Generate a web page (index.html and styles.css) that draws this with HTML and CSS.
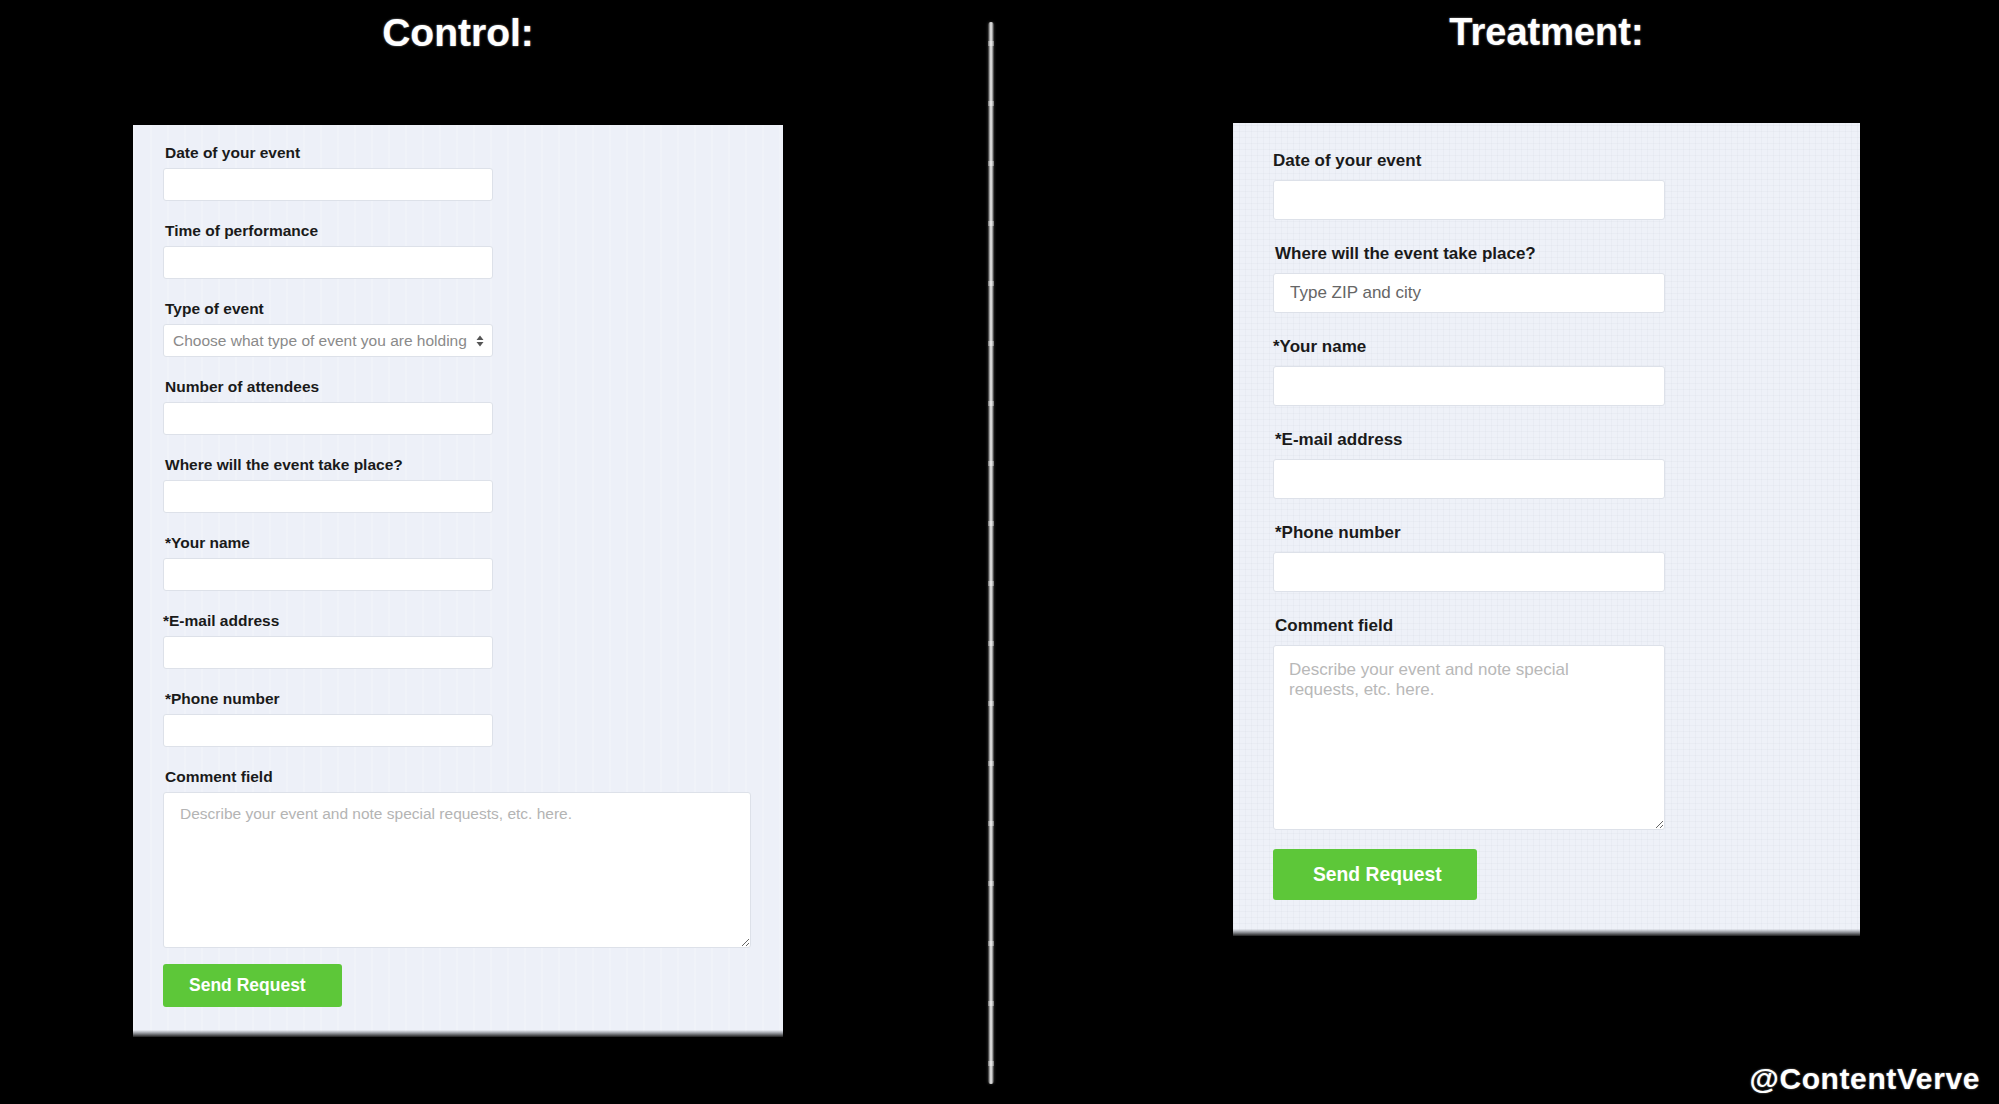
FILE: index.html
```html
<!DOCTYPE html>
<html lang="en">
<head>
  <meta charset="UTF-8">
  <meta name="viewport" content="width=device-width, initial-scale=1.0">
  <title>Control vs Treatment</title>
  <link rel="stylesheet" href="styles.css">
</head>
<body>
  <main class="page">
    <section class="side control">
      <h1 class="side-title">Control:</h1>
      <form class="form-panel">
        <div class="field">
          <label>Date of your event</label>
          <input class="input" type="text">
        </div>
        <div class="field">
          <label>Time of performance</label>
          <input class="input" type="text">
        </div>
        <div class="field">
          <label>Type of event</label>
          <div class="select-wrap">
            <select class="input select">
              <option>Choose what type of event you are holding</option>
            </select>
            <svg class="select-arrows" width="8" height="12" viewBox="0 0 8 12">
              <path d="M4 0.5 L7.5 5 H0.5 Z M4 11.5 L7.5 7 H0.5 Z" fill="#555"/>
            </svg>
          </div>
        </div>
        <div class="field">
          <label>Number of attendees</label>
          <input class="input" type="text">
        </div>
        <div class="field">
          <label>Where will the event take place?</label>
          <input class="input" type="text">
        </div>
        <div class="field">
          <label>*Your name</label>
          <input class="input" type="text">
        </div>
        <div class="field">
          <label class="flush">*E-mail address</label>
          <input class="input" type="text">
        </div>
        <div class="field">
          <label>*Phone number</label>
          <input class="input" type="text">
        </div>
        <div class="field last">
          <label>Comment field</label>
          <textarea class="input comment" placeholder="Describe your event and note special requests, etc. here."></textarea>
        </div>
        <button class="send" type="button">Send Request</button>
      </form>
    </section>

    <div class="divider"></div>

    <section class="side treatment">
      <h1 class="side-title">Treatment:</h1>
      <form class="form-panel">
        <div class="field">
          <label class="flush">Date of your event</label>
          <input class="input" type="text">
        </div>
        <div class="field">
          <label>Where will the event take place?</label>
          <input class="input" type="text" placeholder="Type ZIP and city">
        </div>
        <div class="field">
          <label class="flush">*Your name</label>
          <input class="input" type="text">
        </div>
        <div class="field">
          <label>*E-mail address</label>
          <input class="input" type="text">
        </div>
        <div class="field">
          <label>*Phone number</label>
          <input class="input" type="text">
        </div>
        <div class="field last">
          <label>Comment field</label>
          <textarea class="input comment" placeholder="Describe your event and note special&#10;requests, etc. here."></textarea>
        </div>
        <button class="send" type="button">Send Request</button>
      </form>
    </section>

    <div class="credit">@ContentVerve</div>
  </main>
</body>
</html>
```

FILE: styles.css
```css
* {
  margin: 0;
  padding: 0;
  box-sizing: border-box;
}

body {
  background: #000;
  font-family: "Liberation Sans", Arial, Helvetica, sans-serif;
  height: 100vh;
  overflow: hidden;
}

.page {
  position: relative;
  display: flex;
  align-items: flex-start;
  height: 1104px;
}

.side {
  display: flex;
  flex-direction: column;
  padding-top: 13px;
}

.side-title {
  color: #fff;
  font-size: 39px;
  line-height: 39px;
  font-weight: bold;
  text-align: center;
  text-shadow: 0 0 2px rgba(255, 255, 255, .6);
}

.control {
  margin-left: 133px;
  width: 650px;
}

.treatment {
  margin-left: 239px;
  width: 627px;
}

.treatment .side-title {
  font-size: 38px;
}

/* divider between the two versions */
.divider {
  flex: none;
  width: 6px;
  height: 1062px;
  margin: 22px 0 0 205px;
  border-radius: 3px;
  background:
    repeating-linear-gradient(to bottom, transparent 0 19px, rgba(255, 255, 255, .35) 19px 24px, transparent 24px 60px),
    linear-gradient(to right, #222 0%, #b4b4b4 30%, #ececec 50%, #b4b4b4 70%, #222 100%);
  box-shadow: 0 0 3px rgba(255, 255, 255, .2);
}

.form-panel {
  display: flex;
  flex-direction: column;
  align-items: flex-start;
  background:
    linear-gradient(to bottom, transparent calc(100% - 7px), #9a9da3 calc(100% - 4px), #1e1e1e 100%),
    repeating-linear-gradient(90deg, rgba(255, 255, 255, .18) 0 2px, transparent 2px 17px),
    #edf0f8;
}

.treatment .form-panel {
  background:
    linear-gradient(to bottom, transparent calc(100% - 7px), #9a9da3 calc(100% - 4px), #1e1e1e 100%),
    repeating-linear-gradient(90deg, rgba(200, 205, 215, .14) 0 1px, transparent 1px 6px),
    repeating-linear-gradient(0deg, rgba(200, 205, 215, .14) 0 1px, transparent 1px 6px),
    #eef1f8;
}

.field {
  display: flex;
  flex-direction: column;
  align-items: flex-start;
}

.field label {
  color: #1a1a1a;
  font-weight: bold;
  padding-left: 2px;
}

.field label.flush {
  padding-left: 0;
}

.input {
  display: block;
  background: #fff;
  border: 1px solid #dde1e9;
  border-radius: 3px;
  font-family: inherit;
  color: #333;
  outline: none;
}

.input::placeholder {
  color: #b4b4b4;
}

.select-wrap {
  position: relative;
}

.select {
  appearance: none;
  -webkit-appearance: none;
  color: #8a8a8a;
  padding-left: 9px;
}

.select-arrows {
  position: absolute;
  right: 9px;
  top: 50%;
  margin-top: -6px;
}

.comment {
  resize: both;
}

.send {
  background: #5dc739;
  color: #fff;
  border: none;
  border-radius: 3px;
  font-family: inherit;
  font-weight: bold;
  text-align: left;
}

/* control sizes */
.control .form-panel {
  margin-top: 73px;
  height: 912px;
  padding: 19px 30px 30px;
}

.control .field {
  margin-bottom: 21px;
}

.control .field.last {
  margin-bottom: 16px;
}

.control label {
  font-size: 15.5px;
  line-height: 18px;
  margin-bottom: 6px;
}

.control .input {
  width: 330px;
  height: 33px;
  font-size: 15.5px;
}

.control .comment {
  width: 588px;
  height: 156px;
  padding: 12px 16px;
  line-height: 18px;
}

.control .send {
  width: 179px;
  height: 43px;
  padding-left: 26px;
  font-size: 17.5px;
}

/* treatment sizes */
.treatment .form-panel {
  margin-top: 71px;
  height: 813px;
  padding: 28px 40px 36px;
}

.treatment .field {
  margin-bottom: 24px;
}

.treatment .field.last {
  margin-bottom: 19px;
}

.treatment label {
  font-size: 17px;
  line-height: 20px;
  margin-bottom: 9px;
}

.treatment .input {
  width: 392px;
  height: 40px;
  font-size: 17px;
  padding-left: 16px;
}

.treatment .input::placeholder {
  color: #666;
}

.treatment .comment {
  height: 185px;
  padding: 14px 15px;
  line-height: 20px;
}

.treatment .comment::placeholder {
  color: #b8b8b8;
}

.treatment .send {
  width: 204px;
  height: 51px;
  padding-left: 40px;
  font-size: 19.3px;
}

.credit {
  position: absolute;
  right: 19px;
  bottom: 10px;
  color: #fff;
  font-size: 30px;
  line-height: 30px;
  font-weight: bold;
  letter-spacing: .6px;
  text-shadow: 0 0 2px rgba(255, 255, 255, .5);
}
```
